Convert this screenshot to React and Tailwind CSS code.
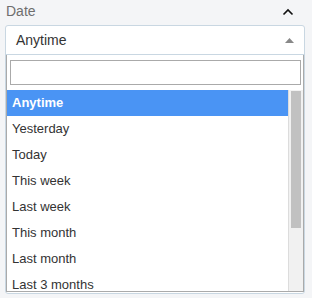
import React from "react";

const items = [
  "Anytime",
  "Yesterday",
  "Today",
  "This week",
  "Last week",
  "This month",
  "Last month",
  "Last 3 months",
];

export default function App() {
  return (
    <div
      className="w-[312px] h-[298px] bg-[#f4f5f7] overflow-hidden"
      style={{ fontFamily: '"Liberation Sans", Arial, sans-serif' }}
    >
      <div className="flex items-center justify-between h-[25px] pl-[6px] pr-[18px] pb-[3px]">
        <span className="text-[14px] leading-[16px] text-[#6e6e6e]">Date</span>
        <svg width="12" height="8" viewBox="0 0 12 8" className="mt-[2px]">
          <polyline points="1.5,6.5 6,2 10.5,6.5" fill="none" stroke="#111" strokeWidth="1.6" />
        </svg>
      </div>
      <div className="ml-[5px] w-[300px] h-[269px] border border-[#c9d7e2] rounded-[3px] bg-white flex flex-col">
        <div className="h-[29px] shrink-0 flex items-center justify-between pl-[10px] pr-[10px] border-b border-[#c9d7e2]">
          <span className="text-[14px] text-[#333]">Anytime</span>
          <svg width="9" height="5" viewBox="0 0 9 5">
            <polygon points="0,5 4.5,0 9,5" fill="#888" />
          </svg>
        </div>
        <div className="flex-1 flex flex-col border-x border-b border-[#aaa] mb-[1px] min-h-0">
          <div className="pt-[5px] pb-[5px] pl-[3px] pr-[2px] shrink-0">
            <div className="h-[25px] border border-[#aaa] bg-white"></div>
          </div>
          <div className="flex-1 flex min-h-0">
            <div className="flex-1 overflow-hidden">
              {items.map((t, i) => (
                <div
                  key={t}
                  className={
                    i === 0
                      ? "h-[26px] leading-[26px] px-[5px] text-[13px] bg-[#4a94f4] text-white font-bold"
                      : "h-[26px] leading-[26px] px-[5px] text-[13px] text-[#333]"
                  }
                >
                  {t}
                </div>
              ))}
            </div>
            <div className="w-[15px] shrink-0 bg-[#f1f1f1] border-l border-[#dcdcdc] pt-[1px] px-[2px]">
              <div className="h-[137px] bg-[#c1c1c1]"></div>
            </div>
          </div>
        </div>
      </div>
    </div>
  );
}
